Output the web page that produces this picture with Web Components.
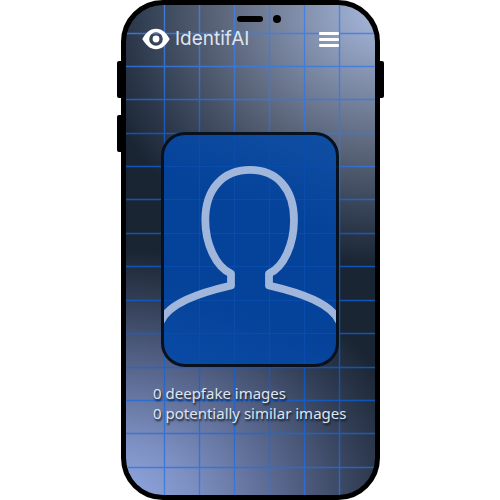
<!DOCTYPE html>
<html lang="en">
<head>
<meta charset="utf-8">
<meta name="viewport" content="width=device-width, initial-scale=1">
<title>IdentifAI</title>
<style>
  body { margin: 0; background: #fff; font-family: "Noto Sans", "Open Sans", sans-serif; color: #dfe5ee; }
</style>
</head>
<body>
<phone-frame>
  <app-header name="IdentifAI"></app-header>
  <portrait-card></portrait-card>
  <match-summary>
    <p>0 deepfake images</p>
    <p>0 potentially similar images</p>
  </match-summary>
</phone-frame>

<script>
  const define = (name, markup, setup) => customElements.define(name, class extends HTMLElement {
    constructor() {
      super();
      this.attachShadow({ mode: "open" }).innerHTML = markup;
    }
    connectedCallback() { if (setup) setup(this, this.shadowRoot); }
  });

  // Grid lines shared by the wallpaper and the portrait card.
  const lines = (xs, ys, w, h) =>
    `<path d="${xs.map(x => `M${x} 0V${h}`).join("")}${ys.map(y => `M0 ${y}H${w}`).join("")}"/>`;

  define("phone-wallpaper", `
    <style>
      :host { display: block; background:
        radial-gradient(ellipse 120% 52% at 104% 1%, #a9bbe0 0%, #8593b0 26%, #5b667b 55%, #303c4f 83%, #1a253300 100%),
        radial-gradient(ellipse 124% 52% at -4% 102%, #93abe6 0%, #7d90c2 25%, #56648a 55%, #303c52 82%, #1a253300 100%),
        #1a2533; }
      svg { display: block; width: 100%; height: 100%; }
    </style>
    <svg viewBox="0 0 249 490" preserveAspectRatio="none" aria-hidden="true">
      <defs><linearGradient id="g" gradientUnits="userSpaceOnUse" x1="249" y1="0" x2="0" y2="490">
        <stop offset="0" stop-color="#4d88e4"/><stop offset=".25" stop-color="#3a74d0"/>
        <stop offset=".4" stop-color="#1054b8"/><stop offset=".65" stop-color="#1054b8"/>
        <stop offset="1" stop-color="#4a84e4"/></linearGradient></defs>
      <g stroke="url(#g)" stroke-width="1.400" fill="none"></g>
    </svg>`, (el, root) => {
      root.querySelector("g").innerHTML = lines(
        [38.5, 73.5, 108.5, 143.5, 178.5, 213.5],
        [28.5, 61.5, 94.5, 128.5, 161.5, 194.5, 228.5, 261.5, 295.5, 328.5, 362.5, 395.5, 428.5, 462.5], 249, 490);
    });

  define("phone-frame", `
    <style>
      :host { display: flex; justify-content: center; padding-left: 1px; }
      .body { position: relative; box-sizing: border-box; width: max(259px, 50%); min-height: 100vh;
        border: 5px solid #000; border-radius: 42px; background: #000; display: flex; flex-direction: column; }
      phone-wallpaper { position: absolute; inset: 0; border-radius: 37px; overflow: hidden; }
      .key { position: absolute; width: 5px; height: 37px; background: #000; }
      .left { left: -9px; border-radius: 2px 0 0 2px; }
      .right { right: -9px; border-radius: 0 2px 2px 0; }
      .upper { top: 56px; }
      .lower { top: 110px; }
      .notch { position: absolute; top: 10px; left: 0; right: 0; display: flex; justify-content: center;
        align-items: center; gap: 10px; padding-left: 17px; }
      .speaker { width: 26px; height: 6px; border-radius: 3px; background: #000; }
      .camera { width: 8px; height: 8px; border-radius: 50%; background: #000; }
      main { position: relative; display: flex; flex-direction: column; padding: 20px 28px; }
    </style>
    <div class="body">
      <span class="key left upper"></span><span class="key left lower"></span><span class="key right upper"></span>
      <phone-wallpaper></phone-wallpaper>
      <div class="notch"><span class="speaker"></span><span class="camera"></span></div>
      <main><slot></slot></main>
    </div>`);

  define("app-header", `
    <style>
      :host { display: flex; justify-content: space-between; align-items: center; height: 28px;
        margin-left: -12px; padding-right: 8px; }
      .brand { display: flex; align-items: center; gap: 5px; color: inherit; text-decoration: none;
        font: 19px/28px Inter, "Liberation Sans", sans-serif; }
      svg { display: block; }
      button { display: flex; flex-direction: column; gap: 3px; width: 20px; padding: 0; border: 0;
        background: none; cursor: pointer; }
      i { height: 3px; border-radius: 1px; background: #fff; }
    </style>
    <a class="brand" href="#">
      <svg width="28" height="22" viewBox="0 0 28 22" aria-hidden="true">
        <path fill="#fff" fill-rule="evenodd" d="M.3 11C3.500 5.600 7.500.8 14 .8S24.500 5.600 27.700 11C24.500 16.400 20.500 21.200 14 21.200S3.500 16.400.3 11ZM14 4.200A6.800 6.800 0 1 0 14 17.800A6.800 6.800 0 1 0 14 4.200Z"/>
        <circle cx="14" cy="11" r="3.400" fill="#fff"/>
      </svg>
      <span></span>
    </a>
    <button type="button" aria-label="Menu"><i></i><i></i><i></i></button>`,
    (el, root) => { root.querySelector("span").textContent = el.getAttribute("name"); });

  define("portrait-card", `
    <style>
      :host { display: block; margin: 79px 8px 0 7px; border: 3px solid #08121f; border-radius: 24px;
        overflow: hidden; background: linear-gradient(200deg, #0f4fa3, #05429a 35%, #05429a 70%, #0b4ba5); }
      svg { display: block; width: 100%; height: auto; }
    </style>
    <svg viewBox="164 135 172 229" role="img" aria-label="Portrait placeholder">
      <g stroke="#0a4cab" fill="none" transform="translate(126 5)"></g>
      <path fill="none" stroke="#a0b6da" stroke-width="7.800" stroke-linejoin="round"
        d="M159 326C165 303 203 292 231 285.500V273.500C216 267 205.300 244 205.300 220C205.300 189 223 169.900 250 169.900S294 189 294 220C294 244 284 267 269 273.500V285.500C297 292 335 303 341 326"/>
    </svg>`, (el, root) => {
      root.querySelector("g").innerHTML = lines([73.5, 108.5, 143.5, 178.5],
        [161.5, 194.5, 228.5, 261.5, 295.5, 328.5], 249, 490);
    });

  define("match-summary", `
    <style>
      :host { display: block; margin-top: 16px; margin-right: -20px; margin-left: -1px; font-size: 15px; line-height: 20px;
        text-shadow: 1px 2px 2px #101a2c; }
      ::slotted(p) { margin: 0; }
    </style>
    <slot></slot>`);
</script>
</body>
</html>
